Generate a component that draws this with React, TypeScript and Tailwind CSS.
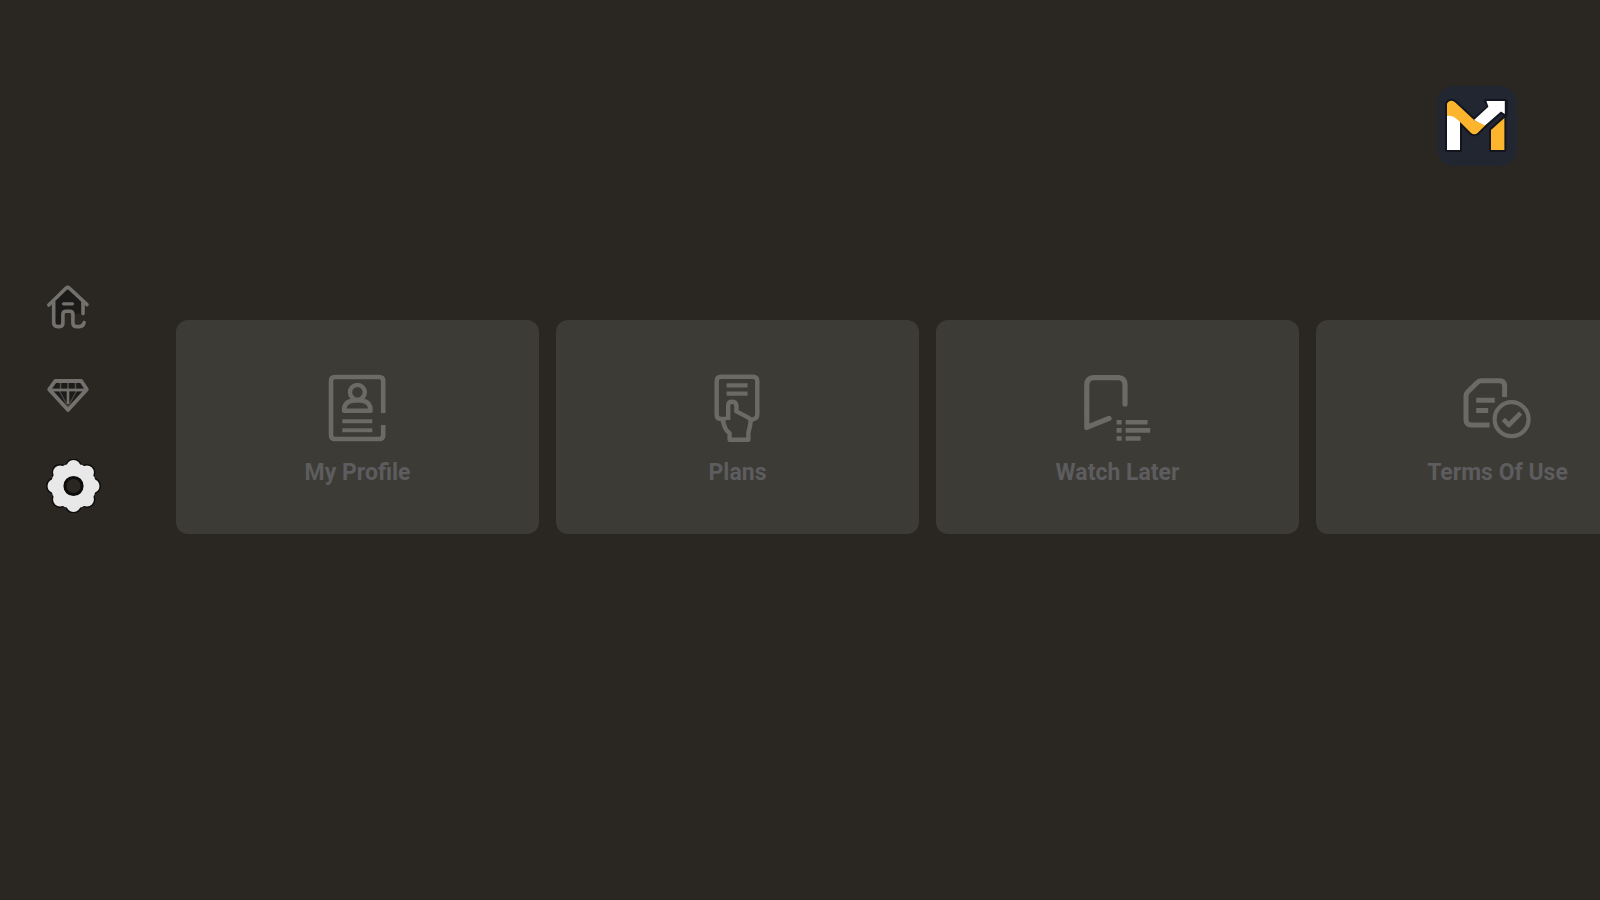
import type { ReactNode } from "react";

/* --------------------------- sidebar icons --------------------------- */
function HomeIcon() {
  return (
    <svg width="44" height="46" viewBox="0 0 44 46" fill="none" stroke="currentColor" strokeWidth="3.6" strokeLinecap="round" strokeLinejoin="round">
      <path d="M8 18 21.7 5 36 18v12h-9l-5-5-6 4v12H8z" fill="#1d1b19" stroke="none" />
      <path d="M2.8 21 19.9 4.3q1.8-1.6 3.6 0L41 20.6" />
      <path d="M7.7 18v20.6q0 4 4 4h2q3.2 0 3.2-3.6V30.4q0-3.2 3.2-3.2h3.6q3.2 0 3.2 3.2V39q0 3.6 3.4 3.6h3q4.2 0 4.8-4" />
      <path d="M37 18v11.6" />
      <path d="M17.5 19.8h9" strokeWidth="3.2" />
    </svg>
  );
}

function DiamondIcon() {
  return (
    <svg width="44" height="37" viewBox="0 0 44 37" fill="none" stroke="currentColor" strokeLinejoin="round">
      <path d="M9.2 5h26l5.6 8.4L22 34 3.2 13.4z" fill="#1d1b19" strokeWidth="3.8" />
      <path d="M6 14h32" strokeWidth="2.8" />
      <path d="M22 13v15" strokeWidth="2.6" />
      <path d="m13 14 9 17 9-17" strokeWidth="1.4" opacity="0.5" />
      <path d="M14.5 7v6M22 7v6M29.5 7v6" strokeWidth="1.6" opacity="0.6" />
    </svg>
  );
}

const petals = [0, 45, 90, 135, 180, 225, 270, 315];

function GearIcon() {
  return (
    <svg width="56" height="54" viewBox="0 0 56 54">
      <g fill="#0d0c0b" stroke="#0d0c0b" strokeWidth="3">
        {petals.map((angle) => (
          <circle key={angle} cx="27.5" cy="8" r="7" transform={`rotate(${angle} 27.5 27)`} />
        ))}
      </g>
      <g fill="currentColor">
        {petals.map((angle) => (
          <circle key={angle} cx="27.5" cy="8" r="7" transform={`rotate(${angle} 27.5 27)`} />
        ))}
        <circle cx="27.5" cy="27" r="22.6" />
      </g>
      <circle cx="27.5" cy="27" r="8.6" fill="#2a2723" stroke="#0d0c0b" strokeWidth="3" />
    </svg>
  );
}

/* --------------------------- card icons --------------------------- */
function CardIcon({ children }: { children: ReactNode }) {
  return (
    <svg className="text-[#6b6a66]" width="70" height="70" viewBox="0 0 70 70" fill="none" stroke="currentColor" strokeWidth="4.6" strokeLinejoin="round">
      {children}
    </svg>
  );
}

function ProfileIcon() {
  return (
    <CardIcon>
      <path d="M60.2 40V8q0-4-4-4H12q-4 0-4 4v54q0 4 4 4h44.2q4 0 4-4V52" />
      <circle cx="34.4" cy="19.3" r="7.4" strokeWidth="4.4" />
      <path d="M21 37.8h26.6q0-9.8-10-10.3H31q-10 .5-10 10.3z" strokeWidth="4.4" />
      <path d="M19.3 48.3h30M19.3 57.3h30" strokeWidth="4" />
    </CardIcon>
  );
}

function PlansIcon() {
  return (
    <CardIcon>
      <path d="M23 46h-5q-4.3 0-4.3-4.3V8q0-4.3 4.3-4.3h32q4.3 0 4.3 4.3v33.5q0 4-4.3 4.8l-3 .6" strokeWidth="4.4" />
      <path d="M23.6 12.4h21M23.6 20.6h21" strokeWidth="4.4" />
      <path d="M25.2 47V32.4q0-3.6 3.8-3.6t4.4 3.6v6l11.6 6q3 1.6 2.6 4.6-.4 4.6-2.2 10.4v7.4H26.6v-6.6q-4.2-3.4-5.2-7.2l-2-6.4" strokeWidth="4.4" />
    </CardIcon>
  );
}

function WatchLaterIcon() {
  return (
    <CardIcon>
      <path d="M42 31V12q0-7.2-6.6-7.4H10.8q-7 .2-7 7.4v42.4L26 45.4" strokeWidth="5.2" strokeLinecap="round" />
      <path d="M42.6 49.3h22M42.6 57.4h24.6M42.6 65.5h15" />
      <path d="M33.6 49.3h5M33.6 57.4h5M33.6 65.5h5" />
    </CardIcon>
  );
}

function TermsIcon() {
  return (
    <CardIcon>
      <path d="M41.6 24V13q0-5.2-5.2-5.2H18.2q-2.4 0-4.2 2L4.8 18.8q-1.8 1.8-1.8 4.4v23.6Q3 52 8.2 52h18.4" strokeWidth="5" />
      <path d="M13.2 27.2h18.6M13.2 37.4h12" strokeWidth="5" />
      <circle cx="48.6" cy="46.2" r="17" strokeWidth="4.2" />
      <path d="m40.4 46.4 5.4 5.6 11.8-11.8" strokeWidth="4.6" />
    </CardIcon>
  );
}

function Logo() {
  return (
    <svg width="80" height="80" viewBox="0 0 80 80" role="img" aria-label="M">
      <rect width="80" height="80" rx="18" fill="#212631" />
      <g stroke="#12151d" strokeWidth="4" strokeLinejoin="round">
        <path d="M10 22h13v42H10z" />
        <path d="M54 44 67.4 32v32H54z" />
        <path d="m37 34 15.6-13.6L48.6 15h20v14L64 25.4 47.4 40z" />
        <path d="M10 28V17.6q2.6-4.8 8-1.4l19.6 18.4 10.6 4.8-7.4 7.4q-3.4 3-7 0L22 35q-6-5-12-7z" />
      </g>
      <path d="M10 25h13v39H10z" fill="#fff" />
      <path d="M54 44 67.4 32v32H54z" fill="#fdb52d" />
      <path d="m37 34 14.4-13.2L49.4 15h18.4v13L64 25.4 47.4 40z" fill="#fff" />
      <path d="M10 30V17.6q2.6-4.8 8-1.4l19.6 18.4 10.6 4.8-7.4 7.4q-3.4 3-7 0L22 35q-6-6-12-5z" fill="#fdb52d" />
    </svg>
  );
}

/* -------------------------------- UI -------------------------------- */
const cards = [
  { label: "My Profile", icon: <ProfileIcon /> },
  { label: "Plans", icon: <PlansIcon /> },
  { label: "Watch Later", icon: <WatchLaterIcon /> },
  { label: "Terms Of Use", icon: <TermsIcon /> },
];

export default function App() {
  return (
    <div className="min-h-screen overflow-hidden bg-[#2a2723] font-['Roboto',sans-serif]">
      <header className="flex justify-end pt-[86px] pr-[83px]">
        <Logo />
      </header>

      <div className="mt-[118px] flex items-start">
        <nav className="flex w-44 shrink-0 flex-col items-start gap-[46px] pl-[46px] text-[#73716d]">
          <button type="button" aria-label="Home">
            <HomeIcon />
          </button>
          <button type="button" aria-label="Premium">
            <DiamondIcon />
          </button>
          <button type="button" aria-label="Settings" aria-current="page" className="text-[#e8e8e8]">
            <GearIcon />
          </button>
        </nav>

        <main className="mt-9 flex min-w-0 flex-1 gap-[17px] overflow-hidden">
          {cards.map(({ label, icon }) => (
            <button
              key={label}
              type="button"
              className="flex w-[363px] shrink-0 flex-col items-center gap-4 rounded-xl bg-[#3c3b36] pt-[53px] pb-[47px] text-[#5d5c5e]"
            >
              {icon}
              <span className="text-[23px] leading-7 font-bold">{label}</span>
            </button>
          ))}
        </main>
      </div>
    </div>
  );
}
